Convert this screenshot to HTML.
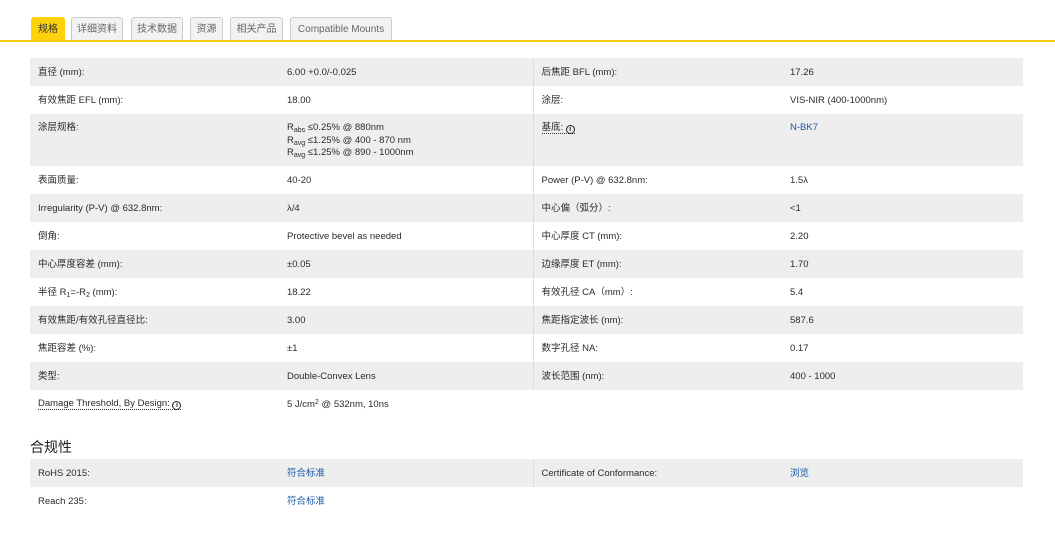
<!DOCTYPE html>
<html><head><meta charset="utf-8"><style>
*{margin:0;padding:0;box-sizing:border-box}
body{width:1055px;height:536px;background:#fff;font-family:"Liberation Sans","Noto Sans CJK SC",sans-serif;font-size:9.5px;color:#2a2a2a;position:relative;overflow:hidden}
.tab{position:absolute;top:17px;height:24px;border:1px solid #ccc;border-bottom:none;border-radius:3px 3px 0 0;background:#f2f2f2;color:#666;font-size:10px;line-height:24px;text-align:center}
.tab.on{background:#fdd20a;border-color:#fdd20a;color:#333}
.line{position:absolute;left:0;top:40px;width:1055px;height:2px;background:#f5cc14}
table{position:absolute;left:30px;width:993px;border-collapse:collapse;table-layout:fixed}
td{height:28px;padding:2px 8px 0;vertical-align:middle;white-space:nowrap;line-height:12px;overflow:hidden}
tr.g td{background:#eeeeee}
td.c1{width:249px}td.c2{width:254px;border-right:1px solid #ddd}td.c3{width:249px}
a{color:#1a5aa8;text-decoration:none}
.dot{border-bottom:1px dotted #333}
.i{display:inline-block;width:9px;height:9px;border:1.3px solid #222;border-radius:50%;font-size:7px;line-height:7px;text-align:center;font-weight:bold;vertical-align:-1px}
sub{font-size:7px;line-height:0;vertical-align:-2px}sup{font-size:7px;line-height:0;vertical-align:3px}
h3{position:absolute;left:30px;top:437px;font-size:14px;font-weight:normal;color:#222}
.tall td{height:52px;vertical-align:top;padding-top:8px}
</style></head><body>
<div class="tab on" style="left:31px;width:34px">规格</div>
<div class="tab" style="left:71px;width:52px">详细资料</div>
<div class="tab" style="left:131px;width:52px">技术数据</div>
<div class="tab" style="left:190px;width:33px">资源</div>
<div class="tab" style="left:230px;width:53px">相关产品</div>
<div class="tab" style="left:290px;width:102px">Compatible Mounts</div>
<div class="line"></div>
<table style="top:58px">
<tr class="g"><td class="c1">直径 (mm):</td><td class="c2">6.00 +0.0/-0.025</td><td class="c3">后焦距 BFL (mm):</td><td>17.26</td></tr>
<tr><td class="c1">有效焦距 EFL (mm):</td><td class="c2">18.00</td><td class="c3">涂层:</td><td>VIS-NIR (400-1000nm)</td></tr>
<tr class="g tall"><td class="c1">涂层规格:</td><td class="c2" style="padding-top:8px;line-height:12.5px">R<sub>abs</sub> ≤0.25% @ 880nm<br>R<sub>avg</sub> ≤1.25% @ 400 - 870 nm<br>R<sub>avg</sub> ≤1.25% @ 890 - 1000nm</td><td class="c3"><span class="dot">基底: <span class="i">i</span></span></td><td><a>N-BK7</a></td></tr>
<tr><td class="c1">表面质量:</td><td class="c2">40-20</td><td class="c3">Power (P-V) @ 632.8nm:</td><td>1.5λ</td></tr>
<tr class="g"><td class="c1">Irregularity (P-V) @ 632.8nm:</td><td class="c2">λ/4</td><td class="c3">中心偏（弧分）:</td><td>&lt;1</td></tr>
<tr><td class="c1">倒角:</td><td class="c2">Protective bevel as needed</td><td class="c3">中心厚度 CT (mm):</td><td>2.20</td></tr>
<tr class="g"><td class="c1">中心厚度容差 (mm):</td><td class="c2">±0.05</td><td class="c3">边缘厚度 ET (mm):</td><td>1.70</td></tr>
<tr><td class="c1">半径 R<sub>1</sub>=-R<sub>2</sub> (mm):</td><td class="c2">18.22</td><td class="c3">有效孔径 CA（mm）:</td><td>5.4</td></tr>
<tr class="g"><td class="c1">有效焦距/有效孔径直径比:</td><td class="c2">3.00</td><td class="c3">焦距指定波长 (nm):</td><td>587.6</td></tr>
<tr><td class="c1">焦距容差 (%):</td><td class="c2">±1</td><td class="c3">数字孔径 NA:</td><td>0.17</td></tr>
<tr class="g"><td class="c1">类型:</td><td class="c2">Double-Convex Lens</td><td class="c3">波长范围 (nm):</td><td>400 - 1000</td></tr>
<tr><td class="c1" style="padding-top:0"><span class="dot">Damage Threshold, By Design: <span class="i">i</span></span></td><td class="c2" style="border-right:none">5 J/cm<sup>2</sup> @ 532nm, 10ns</td><td class="c3"></td><td></td></tr>
</table>
<h3>合规性</h3>
<table style="top:459px">
<tr class="g"><td class="c1">RoHS 2015:</td><td class="c2"><a>符合标准</a></td><td class="c3">Certificate of Conformance:</td><td><a>浏览</a></td></tr>
<tr><td class="c1">Reach 235:</td><td class="c2" style="border-right:none"><a>符合标准</a></td><td class="c3"></td><td></td></tr>
</table>
</body></html>
